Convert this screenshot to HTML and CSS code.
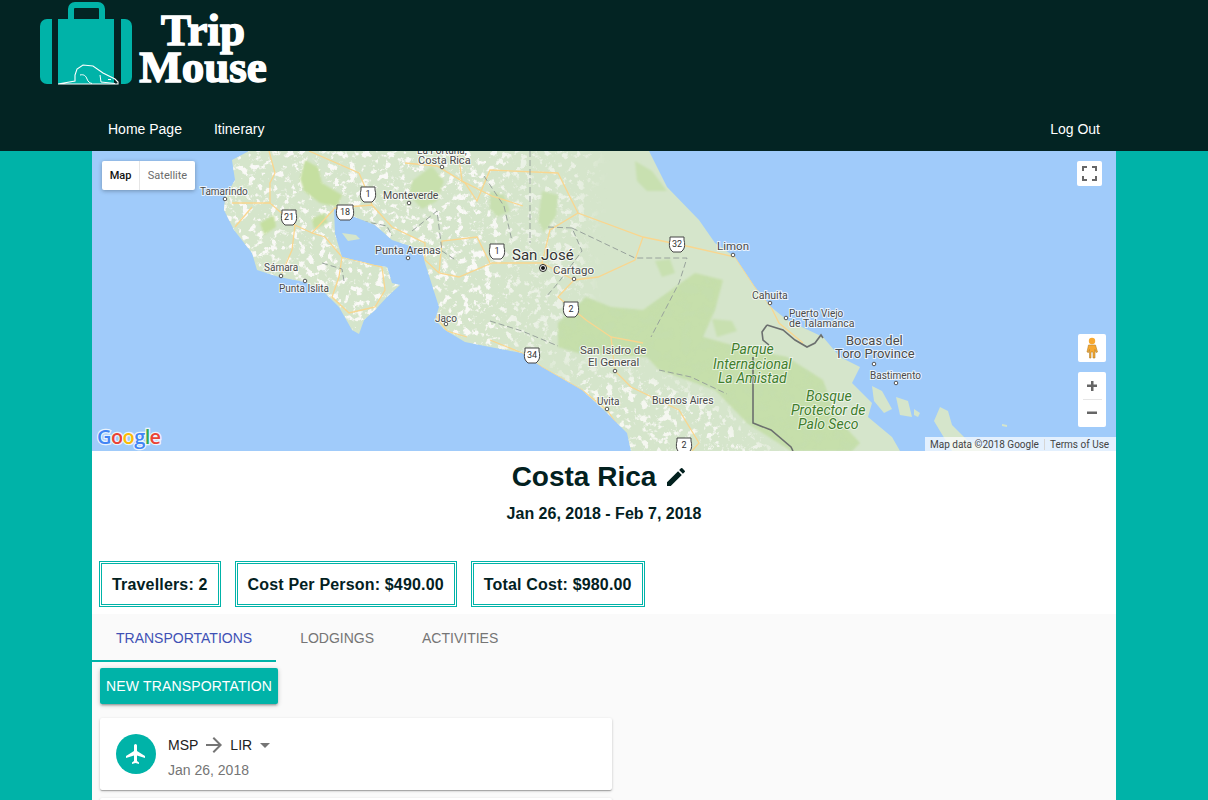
FILE: index.html
```html
<!DOCTYPE html>
<html lang="en">
<head>
<meta charset="utf-8">
<title>Trip Mouse</title>
<link rel="stylesheet" href="styles.css">
</head>
<body>
<div class="page">
<header class="site-header">
  <div class="brand">
    <svg class="brand-mark" width="92" height="88" viewBox="0 0 92 88">
      <path d="M31 19V9a4 4 0 0 1 4-4h23a4 4 0 0 1 4 4v10" fill="none" stroke="#00b3a8" stroke-width="6"/>
      <path d="M12 19H7a7 7 0 0 0-7 7v51a7 7 0 0 0 7 7h5z" fill="#00b3a8"/>
      <rect x="18" y="19" width="56" height="65" fill="#00b3a8"/>
      <path d="M81 19h4a7 7 0 0 1 7 7v51a7 7 0 0 1-7 7h-4z" fill="#00b3a8"/>
      <path d="M18 84H78V82L75 79 63 73 53 66 43 65 37 69 35 75 35 81 18 84" fill="none" stroke="#fff" stroke-width="1.100"/>
      <path d="M40 75C44 74 46 76 47 79S50 83 52 83.500M60 75L61 82 75 83.500M68 79.500L71 79.500" fill="none" stroke="#fff" stroke-width="1"/>
    </svg>
    <div class="brand-name"><span>Trip</span><span>Mouse</span></div>
  </div>
  <nav class="site-nav">
    <a class="nav-link">Home Page</a>
    <a class="nav-link">Itinerary</a>
    <a class="nav-link nav-end">Log Out</a>
  </nav>
</header>

<main class="sheet">
  <section class="map">
    <svg class="map-art" width="1024" height="300" viewBox="0 0 1024 300">
      <defs>
        <filter id="speckle" x="0" y="0" width="100%" height="100%">
          <feTurbulence type="fractalNoise" baseFrequency="0.14" numOctaves="5" seed="7"/>
          <feColorMatrix type="matrix" values="0 0 0 0 0.95  0 0 0 0 0.945  0 0 0 0 0.92  6 6 0 0 -6.300"/>
        </filter>
        <filter id="relief" x="0" y="0" width="100%" height="100%">
          <feTurbulence type="fractalNoise" baseFrequency="0.09" numOctaves="4" seed="3"/>
          <feColorMatrix type="matrix" values="0 0 0 0 0.55  0 0 0 0 0.72  0 0 0 0 0.45  3 3 0 0 -2.800"/>
        </filter>
        <filter id="soft"><feGaussianBlur stdDeviation="1.200"/></filter>
        <filter id="softer"><feGaussianBlur stdDeviation="10"/></filter>
        <clipPath id="landclip">
          <path d="M157 0L140 9 143 29 133 46 132 59 142 79 160 102 165 119 187 126 213 131 233 142 247 156 260 179 267 183 272 169 283 159 295 146 308 134 300 132 295 116 283 114 250 106 243 83 242 58 283 74 300 89 330 99 333 112 347 156 343 169 353 179 373 191 398 196 430 202 450 216 490 239 515 262 535 282 539 300H808L800 286 776 266 780 252 760 232 768 216 748 206 731 186 695 169 679 156 663 136 643 106 623 92 607 69 575 36 557 0Z"/>
        </clipPath>
        <clipPath id="parkclip">
          <path d="M603 122L631 129 623 159 611 186 647 196 695 206 731 229 744 266 768 292 760 300H699L655 272 623 239 567 219 555 206 486 202 466 196 466 172 494 146 519 156 551 159 575 142Z"/>
        </clipPath>
        <mask id="speckmask">
          <g filter="url(#softer)">
            <path d="M110 -20H410L430 230H110Z" fill="#fff"/>
            <path d="M410 -20H500L490 210H410Z" fill="#999"/>
            <path d="M470 215L560 220 640 265 700 320H490Z" fill="#ddd"/>
          </g>
        </mask>
      </defs>
      <rect width="1024" height="300" fill="#a0cbfa"/>
      <path d="M157 0L140 9 143 29 133 46 132 59 142 79 160 102 165 119 187 126 213 131 233 142 247 156 260 179 267 183 272 169 283 159 295 146 308 134 300 132 295 116 283 114 250 106 243 83 242 58 283 74 300 89 330 99 333 112 347 156 343 169 353 179 373 191 398 196 430 202 450 216 490 239 515 262 535 282 539 300H808L800 286 776 266 780 252 760 232 768 216 748 206 731 186 695 169 679 156 663 136 643 106 623 92 607 69 575 36 557 0Z" fill="#d5e5cb"/>
      <g clip-path="url(#landclip)">
        <g mask="url(#speckmask)"><rect width="1024" height="300" filter="url(#speckle)"/></g>
        <path filter="url(#soft)" d="M603 122L631 129 623 159 611 186 647 196 695 206 731 229 744 266 768 292 760 300H699L655 272 623 239 567 219 555 206 486 202 466 196 466 172 494 146 519 156 551 159 575 142Z" fill="#c6dfab"/>
        <g clip-path="url(#parkclip)"><rect width="1024" height="300" filter="url(#relief)" opacity=".3"/></g>
        <g filter="url(#soft)">
          <path d="M213 9L226 16 230 32 250 44 245 56 228 52 212 40 208 28Z" fill="#c5dfa0"/>
          <path d="M320 30L340 15 352 30 345 50 330 58 317 44Z" fill="#c8e0ad"/>
          <path d="M168 72L182 64 184 76 172 84Z" fill="#c5dfa0"/>
          <path d="M220 68L232 62 236 72 222 78Z" fill="#c5dfa0"/>
          <path d="M543 10L560 20 575 40 555 40 545 30Z" fill="#c8e0b0"/>
          <path d="M450 40L466 44 464 66 452 82 446 70Z" fill="#c8e0b0"/>
          <path d="M398 40L412 44 418 60 405 66 398 58Z" fill="#c8e0b0"/>
          <path d="M563 110L578 108 583 122 570 126Z" fill="#c8e0b0"/>
          <path d="M620 168L640 170 645 180 625 186Z" fill="#c8e0b0"/>
        </g>
        <g fill="none" stroke="#f9d68f" stroke-width="1.300">
          <path d="M177 0L183 22 178 32 178 52 203 74 220 82 233 86 250 106 290 116"/>
          <path d="M140 52H178M143 76L160 56M203 74L200 99 190 122"/>
          <path d="M220 82L243 57 280 54 300 76 333 92 333 109 347 122 367 126 400 112 450 112 482 129 466 146 494 169 519 186 551 192"/>
          <path d="M217 0L267 22 273 36 280 54M313 12L345 15 373 32 385 50 398 19 466 22 486 62 551 86 599 96 643 106 663 136 679 156 687 172 711 192"/>
          <path d="M250 106L247 126 240 146 257 162 283 156 293 139 290 116"/>
          <path d="M486 62L458 79 450 112M551 86L543 109 506 126 482 129"/>
          <path d="M347 122L350 90 385 86 398 112M340 160L355 180 375 186"/>
          <path d="M398 189L430 202 450 216 490 239 515 259 531 282M519 186L523 220 539 236 587 259 607 292 600 300"/>
          <path d="M366 0L370 30 400 45 431 55"/>
        </g>
        <g fill="none" stroke="#98a29c" stroke-width="1" stroke-dasharray="6 3">
          <path d="M438 0V92M480 77L543 107H595L587 132 559 186M456 76L480 77 490 100 466 132 454 146"/>
          <path d="M230 112L250 118 252 130M270 70L295 75 300 85M320 80L345 60 350 100 365 110M398 170L430 180 466 195M567 219L599 226 635 243"/>
          <path d="M392 25L412 55 420 90"/>
        </g>
      </g>
      <path d="M675 174L691 179 703 189 715 196 723 192 729 184 731 187M675 174L670 181 671 189 677 194M661 206V272L679 279 699 296 701 300" fill="none" stroke="#6b6f6e" stroke-width="1.600"/>
      <g fill="#d5e5cb">
        <path d="M250 82L264 84 268 88 256 90Z"/>
        <path d="M780 235L790 240 800 258 792 262 782 250Z"/>
        <path d="M804 246L816 250 820 266 808 264Z"/>
        <path d="M822 258L828 262 826 266 822 264Z"/>
        <path d="M848 256L856 260 860 274 876 290 892 296 900 300H860L842 270Z"/>
        <path d="M910 273L915 274 915 276 910 275Z"/>
      </g>
      <g class="m-label">
        <text x="325" y="3" class="t10">La Fortuna,</text>
        <text x="326" y="13" class="t11">Costa Rica</text>
        <text x="108" y="44" class="t10">Tamarindo</text>
        <text x="291" y="48" class="t105">Monteverde</text>
        <text x="283" y="103" class="t11">Punta Arenas</text>
        <text x="172" y="120" class="t10">Sámara</text>
        <text x="187" y="141" class="t10">Punta Islita</text>
        <text x="343" y="171" class="t10">Jaco</text>
        <text x="420" y="109" class="t15">San José</text>
        <text x="461" y="123" class="t115">Cartago</text>
        <text x="625" y="99" class="t115">Limon</text>
        <text x="660" y="148" class="t105">Cahuita</text>
        <text x="697" y="166" class="t10">Puerto Viejo</text>
        <text x="697" y="176" class="t105">de Talamanca</text>
        <text x="754" y="194" class="t13">Bocas del</text>
        <text x="743" y="207" class="t13">Toro Province</text>
        <text x="778" y="228" class="t10">Bastimento</text>
        <text x="488" y="203" class="t115">San Isidro de</text>
        <text x="496" y="215" class="t115">El General</text>
        <text x="505" y="254" class="t10">Uvita</text>
        <text x="560" y="253" class="t105">Buenos Aires</text>
      </g>
      <g class="m-park">
        <text x="639" y="203">Parque</text>
        <text x="621" y="218">Internacional</text>
        <text x="626" y="232">La Amistad</text>
        <text x="714" y="250">Bosque</text>
        <text x="699" y="264">Protector de</text>
        <text x="706" y="278">Palo Seco</text>
      </g>
      <g fill="#fff" stroke="#555" stroke-width="1">
        <circle cx="133" cy="48" r="1.800"/><circle cx="189" cy="125" r="1.800"/><circle cx="213" cy="130" r="1.800"/>
        <circle cx="354" cy="173" r="1.800"/><circle cx="316" cy="107" r="1.800"/><circle cx="317" cy="52" r="1.800"/>
        <circle cx="350" cy="16" r="1.800"/><circle cx="641" cy="104" r="1.800"/><circle cx="678" cy="152" r="1.800"/>
        <circle cx="694" cy="167" r="1.800"/><circle cx="782" cy="213" r="1.800"/><circle cx="804" cy="232" r="1.800"/>
        <circle cx="482" cy="128" r="1.800"/><circle cx="523" cy="220" r="1.800"/><circle cx="515" cy="258" r="1.800"/>
      </g>
      <circle cx="451" cy="117" r="3.500" fill="#fff" stroke="#222" stroke-width="1"/><circle cx="451" cy="117" r="2" fill="#111"/>
      <g class="shield">
        <g transform="translate(197 66)"><path d="M-7-7h14l0 3c1 3 1 8-1 10l-2 2h-8l-2-2c-2-2-2-7-1-10z"/><text y="3">21</text></g>
        <g transform="translate(253 61)"><path d="M-8-7h16l0 3c1 3 1 8-1 10l-2 2h-10l-2-2c-2-2-2-7-1-10z"/><text y="3">18</text></g>
        <g transform="translate(276 43)"><path d="M-7-7h14l0 3c1 3 1 8-1 10l-2 2h-8l-2-2c-2-2-2-7-1-10z"/><text y="3">1</text></g>
        <g transform="translate(405 100)"><path d="M-7-7h14l0 3c1 3 1 8-1 10l-2 2h-8l-2-2c-2-2-2-7-1-10z"/><text y="3">1</text></g>
        <g transform="translate(585 93)"><path d="M-7-7h14l0 3c1 3 1 8-1 10l-2 2h-8l-2-2c-2-2-2-7-1-10z"/><text y="3">32</text></g>
        <g transform="translate(479 158)"><path d="M-7-7h14l0 3c1 3 1 8-1 10l-2 2h-8l-2-2c-2-2-2-7-1-10z"/><text y="3">2</text></g>
        <g transform="translate(440 204)"><path d="M-7-7h14l0 3c1 3 1 8-1 10l-2 2h-8l-2-2c-2-2-2-7-1-10z"/><text y="3">34</text></g>
        <g transform="translate(592 294)"><path d="M-7-7h14l0 3c1 3 1 8-1 10l-2 2h-8l-2-2c-2-2-2-7-1-10z"/><text y="3">2</text></g>
      </g>
      <text class="g-logo" x="5" y="293"><tspan fill="#4285f4">G</tspan><tspan fill="#ea4335">o</tspan><tspan fill="#fbbc05">o</tspan><tspan fill="#4285f4">g</tspan><tspan fill="#34a853">l</tspan><tspan fill="#ea4335">e</tspan></text>
    </svg>

    <div class="map-type">
      <span class="type-on">Map</span>
      <span class="type-off">Satellite</span>
    </div>
    <div class="ctl fullscreen">
      <svg width="15" height="15" viewBox="0 0 15 15"><path d="M1 5V1h4M10 1h4v4M14 10v4h-4M5 14H1v-4" fill="none" stroke="#666" stroke-width="2"/></svg>
    </div>
    <div class="ctl pegman">
      <svg width="12" height="22" viewBox="0 0 12 22"><circle cx="6" cy="4" r="3.200" fill="#f7a82f"/><path d="M2.500 8h7l2 7-1.500.5-1-3V21H7v-6H5v6H3.500v-8.500l-1 3L1 15z" fill="#f7a82f" stroke="#b3812c" stroke-width=".6"/></svg>
    </div>
    <div class="ctl zoom">
      <svg width="12" height="12" viewBox="0 0 12 12" class="zoom-ico"><path d="M5 1h2.500v3.500H11V7H7.500v4H5V7H1V4.500h4z" fill="#666"/></svg>
      <span class="zoom-rule"></span>
      <svg width="12" height="12" viewBox="0 0 12 12" class="zoom-ico"><path d="M1 4.500h10V7H1z" fill="#666"/></svg>
    </div>
    <div class="attribution">
      <span class="attr-item">Map data ©2018 Google</span>
      <span class="attr-item attr-sep">Terms of Use</span>
    </div>
  </section>

  <section class="trip-head">
    <h1 class="trip-title">Costa Rica
      <svg class="edit-ico" width="24" height="24" viewBox="0 0 24 24"><path d="M3 17.250V21h3.750L17.810 9.940l-3.750-3.750L3 17.250zM20.710 7.040a1 1 0 0 0 0-1.410l-2.340-2.340a1 1 0 0 0-1.410 0l-1.830 1.830 3.750 3.750 1.830-1.830z" fill="#03211f"/></svg>
    </h1>
    <p class="trip-dates">Jan 26, 2018 - Feb 7, 2018</p>
  </section>

  <section class="stats">
    <div class="stat">Travellers: 2</div>
    <div class="stat">Cost Per Person: $490.00</div>
    <div class="stat">Total Cost: $980.00</div>
  </section>

  <section class="panel">
    <div class="tabs">
      <div class="tab tab-active">Transportations</div>
      <div class="tab">Lodgings</div>
      <div class="tab">Activities</div>
    </div>
    <div class="panel-body">
      <button class="new-btn">New Transportation</button>
      <article class="card">
        <span class="avatar">
          <svg width="24" height="24" viewBox="0 0 24 24"><path d="M21 16v-2l-8-5V3.500a1.500 1.500 0 0 0-3 0V9l-8 5v2l8-2.500V19l-2 1.500V22l3.500-1 3.500 1v-1.500L13 19v-5.500l8 2.500z" fill="#fff"/></svg>
        </span>
        <div class="card-text">
          <div class="route">MSP
            <svg class="route-arrow" width="24" height="24" viewBox="0 0 24 24"><path d="M12 4l-1.410 1.410L16.170 11H4v2h12.170l-5.580 5.590L12 20l8-8z" fill="#757575"/></svg>
            LIR
            <svg class="route-caret" width="24" height="24" viewBox="0 0 24 24"><path d="M7 10l5 5 5-5z" fill="#757575"/></svg>
          </div>
          <div class="card-date">Jan 26, 2018</div>
        </div>
      </article>
      <article class="card"></article>
    </div>
  </section>
</main>
</div>
</body>
</html>
```

FILE: styles.css
```css
* { box-sizing: border-box; }
html, body { margin: 0; padding: 0; }
body { background: #00b3a8; font-family: "Liberation Sans", Arial, sans-serif; color: #03211f; }
.page { height: 100vh; overflow: hidden; }

.site-header { background: #032423; height: 151px; display: flex; flex-direction: column; }
.brand { height: 108px; padding: 0 0 0 40px; display: flex; align-items: flex-start; }
.brand-mark { display: block; flex: none; }
.brand-name { display: flex; flex-direction: column; align-items: center; width: 128px; margin: 12px 0 0 7px; color: #fff; font-family: "Liberation Serif", serif; font-weight: 700; font-size: 45px; line-height: 37px; -webkit-text-stroke: 1.500px #fff; }
.site-nav { height: 43px; padding: 0 108px 2px; display: flex; align-items: center; gap: 32px; }
.nav-link { color: #fff; font-size: 14px; }
.nav-end { margin-left: auto; }

.sheet { width: 1024px; margin: 0 auto; background: #fff; }

.map { position: relative; height: 300px; overflow: hidden; }
.map-art { display: block; }
.m-label text { font-family: Roboto, sans-serif; fill: #4a4a4a; paint-order: stroke; stroke: rgba(255,255,255,.75); stroke-width: 2px; }
.t10 { font-size: 10px; }
.t105 { font-size: 10.500px; }
.t11 { font-size: 11px; }
.t115 { font-size: 11.500px; }
.t13 { font-size: 13px; }
.t15 { font-size: 15px; fill: #333 !important; }
.m-park text { font-family: Roboto, sans-serif; font-style: italic; font-size: 14px; fill: #3f7d2d; paint-order: stroke; stroke: rgba(255,255,255,.6); stroke-width: 2px; }
.shield path { fill: #fff; stroke: #444; stroke-width: 1; }
.shield text { font-family: Roboto, sans-serif; font-size: 9px; text-anchor: middle; fill: #333; stroke: none; }
.g-logo { font-family: "Open Sans", sans-serif; font-size: 20px; font-weight: 600; letter-spacing: -.6px; paint-order: stroke; stroke: rgba(255,255,255,.8); stroke-width: 2.500px; }

.map-type { position: absolute; left: 10px; top: 10px; height: 29px; width: 93px; background: #fff; border-radius: 2px; box-shadow: 0 1px 4px rgba(0,0,0,.3); display: flex; align-items: center; font-family: Roboto, sans-serif; font-size: 11px; }
.type-on { width: 38px; text-align: center; color: #111; font-weight: 500; border-right: 1px solid #e6e6e6; line-height: 29px; }
.type-off { flex: 1; text-align: center; color: #6b6b6b; }
.ctl { position: absolute; background: #fff; border-radius: 2px; display: flex; align-items: center; justify-content: center; }
.fullscreen { right: 14px; top: 10px; width: 25px; height: 25px; }
.pegman { right: 10px; top: 183px; width: 28px; height: 28px; }
.zoom { right: 10px; top: 221px; width: 28px; height: 55px; flex-direction: column; padding: 8px 0; justify-content: space-between; }
.zoom-rule { width: 19px; height: 1px; background: #e6e6e6; }
.zoom-ico { display: block; }
.attribution { position: absolute; right: 0; bottom: 0; height: 14px; width: 191px; background: rgba(255,255,255,.7); display: flex; align-items: center; font-family: Roboto, sans-serif; font-size: 10px; color: #444; white-space: nowrap; }
.attr-item { padding: 0 5px; }
.attr-sep { border-left: 1px solid #d6d6d6; }

.trip-head { text-align: center; padding-top: 10px; height: 110px; }
.trip-title { margin: 0; font-size: 28px; line-height: 32px; font-weight: 700; display: flex; justify-content: center; align-items: center; }
.edit-ico { margin: 0 8px 0 8px; display: block; }
.trip-dates { margin: 11px 0 0; font-size: 16px; font-weight: 700; line-height: 20px; }

.stats { display: flex; gap: 14px; padding: 0 7px; height: 53px; align-items: flex-start; }
.stat { height: 46px; border: 3px double #00b3a8; padding: 2px 10px 0; display: flex; align-items: center; font-size: 16px; font-weight: 700; letter-spacing: .17px; white-space: nowrap; }

.panel { background: #fafafa; height: 300px; }
.tabs { display: flex; height: 48px; }
.tab { padding: 0 24px; font-size: 14px; line-height: 48px; text-transform: uppercase; color: #757575; }
.tab-active { color: #3f51b5; border-bottom: 2px solid #00b3a8; }
.panel-body { padding: 6px 8px 0; display: flex; flex-direction: column; align-items: flex-start; }
.new-btn { height: 36px; padding: 0 6px; border: 0; border-radius: 2px; background: #00b3a8; color: #fff; font: 14px "Liberation Sans", Arial, sans-serif; letter-spacing: .17px; text-transform: uppercase; box-shadow: 0 1px 5px rgba(0,0,0,.2), 0 2px 2px rgba(0,0,0,.14), 0 3px 1px -2px rgba(0,0,0,.12); }
.card { width: 512px; height: 72px; margin-top: 14px; background: #fff; border-radius: 2px; box-shadow: 0 1px 3px rgba(0,0,0,.2), 0 1px 1px rgba(0,0,0,.14), 0 2px 1px -1px rgba(0,0,0,.12); display: flex; align-items: center; padding: 0 16px; gap: 12px; }
.card + .card { margin-top: 8px; }
.avatar { width: 40px; height: 40px; border-radius: 50%; background: #00b3a8; display: flex; align-items: center; justify-content: center; flex: none; }
.card-text { padding-top: 5px; }
.route { display: flex; align-items: center; font-size: 14px; line-height: 24px; color: #212121; height: 24px; }
.route-arrow { margin: 0 4px 0 4px; }
.route-caret { margin-left: 1px; }
.card-date { font-size: 14px; line-height: 20px; color: #757575; margin-top: 3px; }
```
